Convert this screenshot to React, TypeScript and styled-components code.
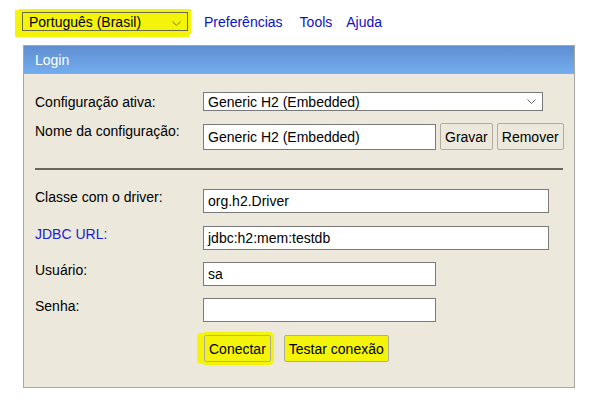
import styled, { createGlobalStyle } from 'styled-components'

const Global = createGlobalStyle`
body {
  margin: 0;
  background: #ffffff;
  font-family: "Liberation Sans", Arial, sans-serif;
  font-size: 14px;
  color: #000;
}
`

const Page = styled.div`
padding: 12px 0 0 22px;
`

const TopBar = styled.div`
display: flex;
align-items: center;
height: 19px;
`

const LangSelect = styled.div`
position: relative;
box-sizing: border-box;
width: 166px;
height: 19px;
padding: 0 0 0 6px;
display: flex;
align-items: center;
justify-content: space-between;
background: #f4f40a;
border: 1px solid #6b6b4a;
box-shadow: 0 0 0 3px #f4f40a, -3px 2px 0 4px #f4f40a;
`

const NavLink = styled.a<{ $gap: number }>`
margin-left: ${(p) => p.$gap}px;
color: #1010c8;
text-decoration: none;
`

const Panel = styled.div`
margin: 14px 0 0 1px;
width: 552px;
box-sizing: border-box;
border: 1px solid #a8a8a0;
background: #ece9dc;
`

const Header = styled.div`
height: 28px;
padding-left: 11px;
display: flex;
align-items: center;
color: #ffffff;
background: linear-gradient(#5e8ed0, #74aef0);
`

const Body = styled.div`
padding: 18px 0 25px 11px;
`

const Row = styled.div<{ $top?: number }>`
display: flex;
align-items: flex-start;
margin-top: ${(p) => p.$top ?? 0}px;
`

const Label = styled.div<{ $link?: boolean; $pad?: number }>`
width: 168px;
flex-shrink: 0;
padding-top: ${(p) => p.$pad ?? 0}px;
color: ${(p) => (p.$link ? '#2222cc' : '#000')};
`

const Field = styled.div<{ $w: number; $h?: number }>`
box-sizing: border-box;
width: ${(p) => p.$w}px;
height: ${(p) => p.$h ?? 24}px;
padding-left: 4px;
display: flex;
align-items: center;
background: #ffffff;
border: 1px solid #7a7a7a;
`

const SelectBox = styled(Field)`
justify-content: space-between;
padding-right: 6px;
`

const Button = styled.button<{ $mark?: boolean }>`
box-sizing: border-box;
height: 27px;
padding: 0 4px;
font-family: inherit;
font-size: 14px;
color: #000;
border: 1px solid #b0ada0;
border-radius: 2px;
background: ${(p) => (p.$mark ? '#f4f40a' : '#ece9dc')};
`

const Buttons = styled.div<{ $gap: number }>`
display: flex;
gap: ${(p) => p.$gap}px;
`

const Divider = styled.div`
width: 528px;
height: 2px;
margin: 18px 0 19px;
background: #66665e;
`

const Chevron = () => (
  <svg width="9" height="6" viewBox="0 0 9 6">
    <polyline points="0.5,0.5 4.5,4.5 8.5,0.5" fill="none" stroke="#666" strokeWidth="1" />
  </svg>
)

export default function App() {
  return (
    <>
      <Global />
      <Page>
        <TopBar>
          <LangSelect>
            Português (Brasil)
            <span style={{ marginRight: 6 }}><Chevron /></span>
          </LangSelect>
          <NavLink $gap={16}>Preferências</NavLink>
          <NavLink $gap={17}>Tools</NavLink>
          <NavLink $gap={14}>Ajuda</NavLink>
        </TopBar>
        <Panel>
          <Header>Login</Header>
          <Body>
            <Row>
              <Label $pad={2}>Configuração ativa:</Label>
              <SelectBox $w={340} $h={19}>
                Generic H2 (Embedded)
                <Chevron />
              </SelectBox>
            </Row>
            <Row $top={12}>
              <Label $pad={0}>Nome da configuração:</Label>
              <Buttons $gap={4}>
                <Field $w={233} $h={26} style={{ marginTop: 1 }}>Generic H2 (Embedded)</Field>
                <Button>Gravar</Button>
                <Button>Remover</Button>
              </Buttons>
            </Row>
            <Divider />
            <Row>
              <Label>Classe com o driver:</Label>
              <Field $w={346}>org.h2.Driver</Field>
            </Row>
            <Row $top={13}>
              <Label $link>JDBC URL:</Label>
              <Field $w={346}>jdbc:h2:mem:testdb</Field>
            </Row>
            <Row $top={12}>
              <Label>Usuário:</Label>
              <Field $w={233}>sa</Field>
            </Row>
            <Row $top={12}>
              <Label>Senha:</Label>
              <Field $w={233}></Field>
            </Row>
            <Row $top={13}>
              <Label></Label>
              <Buttons $gap={13} style={{ marginLeft: 1 }}>
                <Button $mark style={{ boxShadow: '0 0 0 3px #f4f40a, -5px 0 0 2px #f4f40a' }}>Conectar</Button>
                <Button $mark>Testar conexão</Button>
              </Buttons>
            </Row>
          </Body>
        </Panel>
      </Page>
    </>
  )
}
